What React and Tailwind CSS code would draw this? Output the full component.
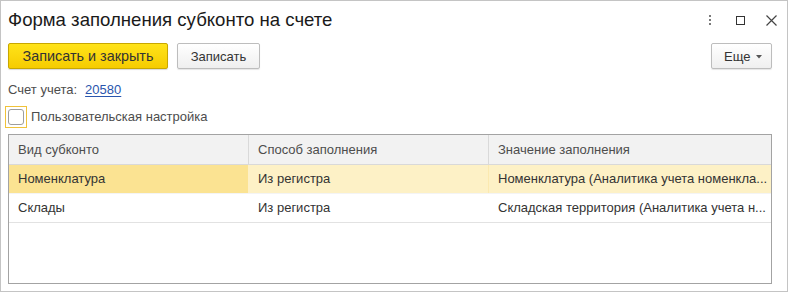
import React from "react";

function Cell({ children, className = "" }) {
  return (
    <div className={"flex items-center pl-[9px] pr-[4px] min-w-0 whitespace-nowrap " + className}>
      <span>{children}</span>
    </div>
  );
}

export default function App() {
  return (
    <div
      className="w-[788px] h-[292px] bg-white border border-[#c4c4c4] flex flex-col text-[#4d4d4d] overflow-hidden"
      style={{ fontFamily: '"Liberation Sans", Arial, sans-serif' }}
    >
      {/* Title bar */}
      <div className="h-[38px] flex items-center pl-[7px] pr-[10px] shrink-0">
        <div className="text-[18.6px] text-[#1a1a1a] leading-none flex-1">
          Форма заполнения субконто на счете
        </div>
        <div className="flex items-center h-full">
          <div className="flex flex-col gap-[2px] mr-[25px]">
            <span className="w-[2px] h-[2px] bg-[#7a7a7a]" />
            <span className="w-[2px] h-[2px] bg-[#7a7a7a]" />
            <span className="w-[2px] h-[2px] bg-[#7a7a7a]" />
          </div>
          <div className="w-[9px] h-[9px] border-[1.5px] border-[#333] mr-[21px]" />
          <svg width="11" height="11" viewBox="0 0 11 11">
            <path d="M0.5 0.5 L10.5 10.5 M10.5 0.5 L0.5 10.5" stroke="#444" strokeWidth="1.2" />
          </svg>
        </div>
      </div>

      {/* Toolbar */}
      <div className="mt-[4px] h-[26px] flex items-stretch pl-[7px] pr-[15px] shrink-0">
        <button className="h-full w-[160px] rounded-[2px] border border-[#c8a700] bg-gradient-to-b from-[#ffe318] to-[#f6cc00] text-[#333] text-[14.4px] leading-none shadow-[0_1px_1px_rgba(0,0,0,0.15)] whitespace-nowrap">
          Записать и закрыть
        </button>
        <button className="ml-[9px] h-full w-[83px] rounded-[2px] border border-[#bdbdbd] bg-gradient-to-b from-white to-[#efefef] text-[#333] text-[13px] leading-none shadow-[0_1px_1px_rgba(0,0,0,0.1)]">
          Записать
        </button>
        <div className="flex-1" />
        <button className="h-full w-[61px] pl-[12px] rounded-[2px] border border-[#bdbdbd] bg-gradient-to-b from-white to-[#efefef] text-[#333] text-[13px] leading-none flex items-center shadow-[0_1px_1px_rgba(0,0,0,0.1)]">
          Еще
          <svg width="6" height="4" viewBox="0 0 6 4" className="ml-[6px] mt-[1px]">
            <path d="M0 0 L6 0 L3 3.5 Z" fill="#555" />
          </svg>
        </button>
      </div>

      {/* Account */}
      <div className="mt-[12px] h-[18px] flex items-center pl-[7px] text-[13px] shrink-0">
        <span>Счет учета:</span>
        <span className="ml-[8px] text-[#2a55ad] underline underline-offset-2">20580</span>
      </div>

      {/* Checkbox */}
      <div className="mt-[7px] h-[22px] flex items-center pl-[4px] text-[13px] shrink-0">
        <div className="w-[22px] h-[22px] border border-[#f0c23a] flex items-center justify-center">
          <div className="w-[16px] h-[16px] border border-[#9e9e9e] rounded-[3px] bg-white" />
        </div>
        <span className="ml-[4px]">Пользовательская настройка</span>
      </div>

      {/* Table */}
      <div className="mt-[6px] ml-[7px] w-[764px] h-[150px] border border-[#a3a3a3] flex flex-col text-[13px] shrink-0">
        <div className="h-[30px] grid grid-cols-[240px_240px_1fr] bg-[#f2f2f2] border-b border-[#d9d9d9]">
          <Cell className="border-r border-[#d9d9d9]">Вид субконто</Cell>
          <Cell className="border-r border-[#d9d9d9]">Способ заполнения</Cell>
          <Cell>Значение заполнения</Cell>
        </div>
        <div className="h-[29px] grid grid-cols-[240px_240px_1fr] text-[#333] border-b border-[#f4f4f4]">
          <Cell className="bg-[#fbe392] border-r border-[#fdf0c8]">Номенклатура</Cell>
          <Cell className="bg-[#fdf1c6] border-r border-[#fbe9b0]">Из регистра</Cell>
          <Cell className="bg-[#fdf1c6]">Номенклатура (Аналитика учета номенкла...</Cell>
        </div>
        <div className="h-[29px] grid grid-cols-[240px_240px_1fr] text-[#333] border-b border-[#e2e2e2]">
          <Cell className="border-r border-white">Склады</Cell>
          <Cell className="border-r border-white">Из регистра</Cell>
          <Cell>Складская территория (Аналитика учета н...</Cell>
        </div>
      </div>
    </div>
  );
}
